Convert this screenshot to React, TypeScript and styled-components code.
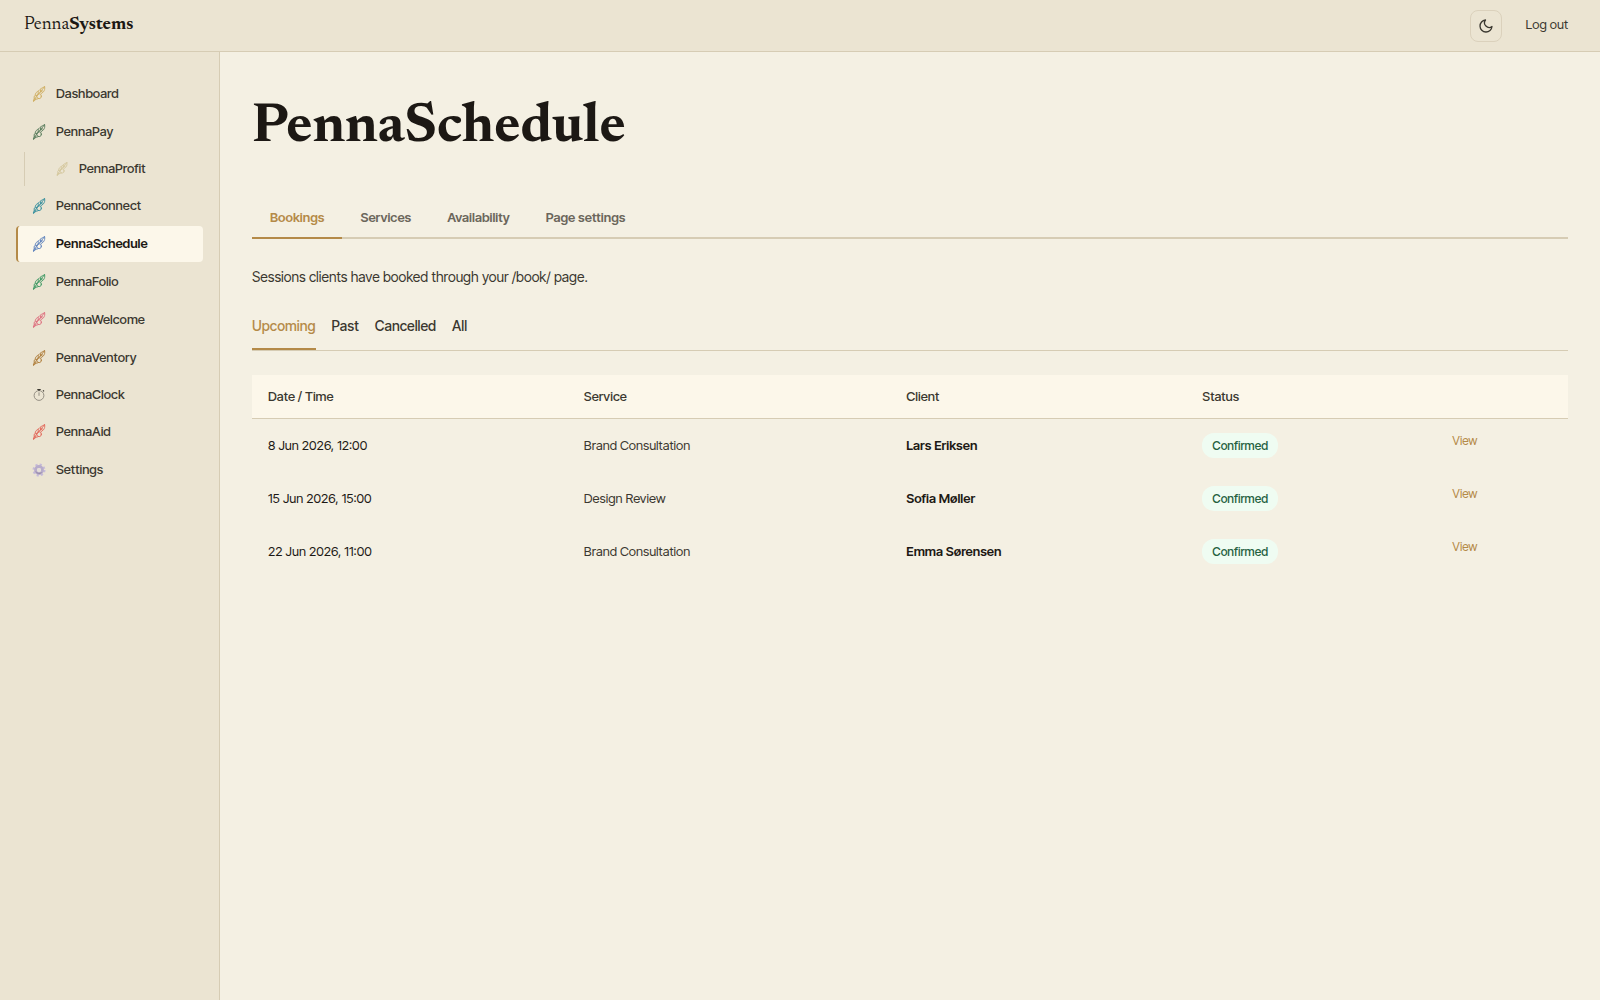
import React, { useState } from "react";
import styled, { createGlobalStyle } from "styled-components";

const c = {
  page: "#f4f0e3",
  chrome: "#ebe4d2",
  line: "#d6ccb4",
  card: "#fcf7ea",
  gold: "#b48a48",
  ink: "#1c1814",
  text: "#3a372f",
  muted: "#6b665b",
};

const Global = createGlobalStyle`
  *, *::before, *::after { box-sizing: border-box; }
  body {
    margin: 0;
    background: ${c.page};
    color: ${c.text};
    font-family: "Inter Tight", Inter, "Liberation Sans", sans-serif;
    font-size: 13px;
    line-height: 20px;
  }
  button { font: inherit; color: inherit; background: none; border: 0; padding: 0; cursor: pointer; }
  a { color: inherit; text-decoration: none; }
`;

const Shell = styled.div`
  display: flex;
  flex-direction: column;
  min-height: 100vh;
`;

const TopBar = styled.header`
  display: flex;
  align-items: center;
  justify-content: space-between;
  height: 52px;
  padding: 0 32px 0 24px;
  background: ${c.chrome};
  border-bottom: 1px solid ${c.line};
`;

const Brand = styled.a`
  padding-bottom: 2px;
  font-family: Newsreader, "Liberation Serif", serif;
  font-variation-settings: "opsz" 6;
  font-size: 18px;
  line-height: 24px;
  color: ${c.ink};
`;

const TopActions = styled.div`
  display: flex;
  align-items: center;
  gap: 24px;
`;

const ThemeButton = styled.button`
  display: grid;
  place-items: center;
  width: 32px;
  height: 32px;
  border: 1px solid #dbd1bc;
  border-radius: 8px;
`;

const LogOut = styled.button`
  padding-bottom: 4px;
`;

const Body = styled.div`
  display: flex;
  flex: 1;
`;

const Sidebar = styled.nav`
  flex: 0 0 220px;
  padding: 24px 16px;
  background: ${c.chrome};
  border-right: 1px solid ${c.line};
`;

const NavList = styled.ul`
  display: flex;
  flex-direction: column;
  gap: 2px;
  margin: 0;
  padding: 0;
  list-style: none;
`;

const NavItem = styled.li<{ $nested?: boolean }>`
  ${(p) => p.$nested && `margin-left: 8px; padding-left: 14px; border-left: 1px solid ${c.line};`}
`;

const NavLink = styled.a<{ $active?: boolean; $height: number }>`
  display: flex;
  align-items: center;
  gap: 10px;
  height: ${(p) => p.$height}px;
  padding: 0 14px;
  border-left: 2px solid ${(p) => (p.$active ? c.gold : "transparent")};
  border-radius: 4px;
  background: ${(p) => (p.$active ? c.card : "transparent")};
  color: ${(p) => (p.$active ? c.ink : c.text)};
  font-weight: ${(p) => (p.$active ? 600 : 500)};
`;

const NavLabel = styled.span`
  padding-bottom: 2px;
`;

const Main = styled.main`
  flex: 1;
  min-width: 0;
  padding: 40px 32px 32px;
`;

const Title = styled.h1`
  margin: 0 0 32px;
  font-family: Newsreader, "Liberation Serif", serif;
  font-variation-settings: "opsz" 6;
  font-size: 56px;
  line-height: 72px;
  font-weight: 700;
  color: ${c.ink};
`;

const Tabs = styled.div`
  display: flex;
  margin-bottom: 28px;
  border-bottom: 2px solid ${c.line};
`;

const Tab = styled.button<{ $active: boolean }>`
  margin-bottom: -2px;
  padding: 11px 18px 10px;
  border-bottom: 2px solid ${(p) => (p.$active ? c.gold : "transparent")};
  color: ${(p) => (p.$active ? c.gold : c.muted)};
  font-weight: 600;
`;

const Intro = styled.p`
  margin: 0 0 28px;
  font-size: 14px;
`;

const Filters = styled.div`
  display: flex;
  gap: 16px;
  margin-bottom: 24px;
  border-bottom: 1px solid ${c.line};
`;

const Filter = styled.button<{ $active: boolean }>`
  padding: 1px 0 12px;
  border-bottom: 2px solid ${(p) => (p.$active ? c.gold : "transparent")};
  color: ${(p) => (p.$active ? c.gold : c.text)};
  font-size: 14px;
  font-weight: 500;
`;

const Table = styled.table`
  width: 100%;
  border-spacing: 0;
  table-layout: fixed;
`;

const Head = styled.th<{ $width: string }>`
  width: ${(p) => p.$width};
  height: 44px;
  padding: 0 16px 2px;
  background: ${c.card};
  border-bottom: 1px solid ${c.line};
  text-align: left;
  font-weight: 500;
`;

const Cell = styled.td<{ $tone?: "ink" | "strong" }>`
  height: 53px;
  padding: 0 16px 2px;
  color: ${(p) => (p.$tone ? c.ink : c.text)};
  font-weight: ${(p) => (p.$tone === "strong" ? 600 : 400)};
`;

const BadgeCell = styled(Cell)`
  padding-bottom: 0;
`;

const ActionCell = styled(Cell)`
  padding-top: 11px;
  vertical-align: top;
`;

const Badge = styled.span`
  display: inline-block;
  padding: 3px 10px;
  border-radius: 12px;
  background: #effcf2;
  color: #24603f;
  font-size: 12px;
  line-height: 19px;
  font-weight: 500;
`;

const ViewLink = styled.a`
  color: ${c.gold};
  font-size: 12px;
`;

function Feather({ color, faded }: { color: string; faded?: boolean }) {
  return (
    <svg width="14" height={faded ? 14 : 16} viewBox="0 0 14 16" fill="none" stroke={color} strokeWidth=".9" strokeLinecap="round" strokeLinejoin="round" opacity={faded ? 0.5 : 0.9} aria-hidden="true">
      <path d="M1.600 15.500 4.600 10" />
      <path d="M12.600.7C9.800 2 8 3 6.900 4.700 4.500 5.800 3.300 7.200 3.100 9.200" />
      <path d="M12.600.7c.5 1.900 0 3.700-1.200 5.200L9 7.700" />
      <path d="M12.200 1.200 5 9.800M10.600 4.800 8.200 6.200M8.600 3.800l-.2 2M6.200 5.600v2.600" />
      <ellipse cx="7.100" cy="10.200" rx="2.300" ry="2.500" />
      <path d="M4.800 9.400C2.600 9 1.500 10.500 2.300 12.200c.8 1.300 2.800 1.200 4.200.3M2.300 12.200l-1 2.800 2.700-1.600" />
    </svg>
  );
}

function Stopwatch() {
  return (
    <svg width="14" height="14" viewBox="0 0 14 14" fill="none" stroke="#8b867a" aria-hidden="true">
      <circle cx="7" cy="7.500" r="4.900" strokeWidth=".9" />
      <path d="M5.300 1.500h3.400M7 1.500v1.400M11 2.300l1 1" stroke="#3a372f" strokeWidth="1.200" />
      <path d="M7 4.300v3.500" strokeWidth=".9" />
    </svg>
  );
}

function Gear() {
  return (
    <svg width="14" height="14" viewBox="0 0 14 14" fill="none" aria-hidden="true">
      <circle cx="7" cy="7" r="5.500" stroke="#c6bbd9" strokeWidth="2" strokeDasharray="2.160 2.160" />
      <circle cx="7" cy="7" r="3.500" stroke="#b8accb" strokeWidth="2.800" />
      <path d="M3.900 8.500A3.500 3.500 0 0 0 9.500 9.500" stroke="#9488a5" strokeWidth="1" />
      <circle cx="7" cy="7" r="2" fill="#e4ddd8" />
    </svg>
  );
}

function Moon() {
  return (
    <svg width="16" height="16" viewBox="0 0 24 24" fill="none" stroke={c.text} strokeWidth="2" strokeLinecap="round" strokeLinejoin="round" aria-hidden="true">
      <path d="M21 12.790A9 9 0 1 1 11.210 3 7 7 0 0 0 21 12.790z" />
    </svg>
  );
}

const nav: { name: string; icon: React.ReactNode; nested?: boolean; height?: number }[] = [
  { name: "Dashboard", icon: <Feather color="#cda956" /> },
  { name: "PennaPay", icon: <Feather color="#48704f" /> },
  { name: "PennaProfit", icon: <Feather color="#bda862" faded />, nested: true, height: 34 },
  { name: "PennaConnect", icon: <Feather color="#258799" /> },
  { name: "PennaSchedule", icon: <Feather color="#4e76b8" /> },
  { name: "PennaFolio", icon: <Feather color="#2b9158" /> },
  { name: "PennaWelcome", icon: <Feather color="#dc6275" /> },
  { name: "PennaVentory", icon: <Feather color="#a9742c" /> },
  { name: "PennaClock", icon: <Stopwatch />, height: 34 },
  { name: "PennaAid", icon: <Feather color="#e25a4c" /> },
  { name: "Settings", icon: <Gear /> },
];

const columns = [
  { label: "Date / Time", width: "24%" },
  { label: "Service", width: "24.5%" },
  { label: "Client", width: "22.5%" },
  { label: "Status", width: "19%" },
  { label: "", width: "10%" },
];

const bookings = [
  { date: "8 Jun 2026, 12:00", service: "Brand Consultation", client: "Lars Eriksen" },
  { date: "15 Jun 2026, 15:00", service: "Design Review", client: "Sofia Møller" },
  { date: "22 Jun 2026, 11:00", service: "Brand Consultation", client: "Emma Sørensen" },
];

export default function App() {
  const [tab, setTab] = useState("Bookings");
  const [filter, setFilter] = useState("Upcoming");
  return (
    <Shell>
      <Global />
      <TopBar>
        <Brand href="#">Penna<b>Systems</b></Brand>
        <TopActions>
          <ThemeButton type="button" aria-label="Toggle dark mode"><Moon /></ThemeButton>
          <LogOut type="button">Log out</LogOut>
        </TopActions>
      </TopBar>
      <Body>
        <Sidebar aria-label="Apps">
          <NavList>
            {nav.map((n) => (
              <NavItem key={n.name} $nested={n.nested}>
                <NavLink href="#" $height={n.height ?? 36} $active={n.name === "PennaSchedule"}>
                  {n.icon}
                  <NavLabel>{n.name}</NavLabel>
                </NavLink>
              </NavItem>
            ))}
          </NavList>
        </Sidebar>
        <Main>
          <Title>PennaSchedule</Title>
          <Tabs role="tablist">
            {["Bookings", "Services", "Availability", "Page settings"].map((t) => (
              <Tab key={t} type="button" role="tab" aria-selected={t === tab} $active={t === tab} onClick={() => setTab(t)}>{t}</Tab>
            ))}
          </Tabs>
          <Intro>Sessions clients have booked through your /book/ page.</Intro>
          <Filters>
            {["Upcoming", "Past", "Cancelled", "All"].map((f) => (
              <Filter key={f} type="button" aria-pressed={f === filter} $active={f === filter} onClick={() => setFilter(f)}>{f}</Filter>
            ))}
          </Filters>
          <Table>
            <thead>
              <tr>{columns.map((h) => <Head key={h.label} $width={h.width}>{h.label}</Head>)}</tr>
            </thead>
            <tbody>
              {bookings.map((b) => (
                <tr key={b.date}>
                  <Cell $tone="ink">{b.date}</Cell>
                  <Cell>{b.service}</Cell>
                  <Cell $tone="strong">{b.client}</Cell>
                  <BadgeCell><Badge>Confirmed</Badge></BadgeCell>
                  <ActionCell><ViewLink href="#">View</ViewLink></ActionCell>
                </tr>
              ))}
            </tbody>
          </Table>
        </Main>
      </Body>
    </Shell>
  );
}
